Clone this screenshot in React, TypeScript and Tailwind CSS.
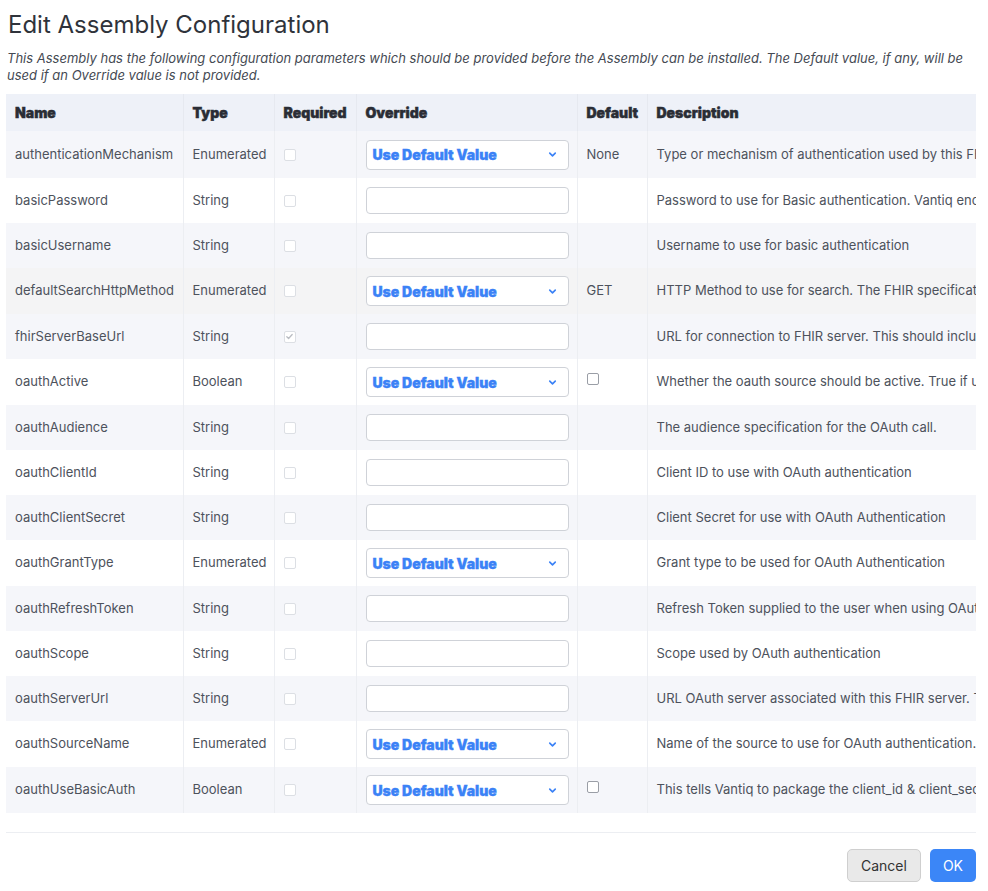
import { ChevronDown } from "lucide-react";

type Param = {
  name: string;
  type: string;
  required?: boolean;
  kind: "select" | "input";
  def?: string;
  defCheck?: boolean;
  desc: string;
};

const params: Param[] = [
  { name: "authenticationMechanism", type: "Enumerated", kind: "select", def: "None", desc: "Type or mechanism of authentication used by this FHIR server when making requests." },
  { name: "basicPassword", type: "String", kind: "input", desc: "Password to use for Basic authentication. Vantiq encrypts this value when stored." },
  { name: "basicUsername", type: "String", kind: "input", desc: "Username to use for basic authentication" },
  { name: "defaultSearchHttpMethod", type: "Enumerated", kind: "select", def: "GET", desc: "HTTP Method to use for search. The FHIR specification allows either GET or POST." },
  { name: "fhirServerBaseUrl", type: "String", required: true, kind: "input", desc: "URL for connection to FHIR server. This should include the base path of the server." },
  { name: "oauthActive", type: "Boolean", kind: "select", defCheck: true, desc: "Whether the oauth source should be active. True if using OAuth authentication." },
  { name: "oauthAudience", type: "String", kind: "input", desc: "The audience specification for the OAuth call." },
  { name: "oauthClientId", type: "String", kind: "input", desc: "Client ID to use with OAuth authentication" },
  { name: "oauthClientSecret", type: "String", kind: "input", desc: "Client Secret for use with OAuth Authentication" },
  { name: "oauthGrantType", type: "Enumerated", kind: "select", desc: "Grant type to be used for OAuth Authentication" },
  { name: "oauthRefreshToken", type: "String", kind: "input", desc: "Refresh Token supplied to the user when using OAuth authentication." },
  { name: "oauthScope", type: "String", kind: "input", desc: "Scope used by OAuth authentication" },
  { name: "oauthServerUrl", type: "String", kind: "input", desc: "URL OAuth server associated with this FHIR server. This is used to obtain tokens." },
  { name: "oauthSourceName", type: "Enumerated", kind: "select", desc: "Name of the source to use for OAuth authentication. Generally not changed." },
  { name: "oauthUseBasicAuth", type: "Boolean", kind: "select", defCheck: true, desc: "This tells Vantiq to package the client_id & client_secret as a basic auth header." },
];

const th =
  "px-[9px] text-left text-[14px] font-black text-[#2a2d35] [-webkit-text-stroke:0.45px_#2a2d35] border-r border-[#e6e9f0] last:border-r-0";
const td = "px-[9px] text-[13px] text-[#4d525c] border-r border-[#eceef2] last:border-r-0 whitespace-nowrap";

function Box({ checked, dark }: { checked?: boolean; dark?: boolean }) {
  return (
    <span
      className={
        "flex h-[12px] w-[12px] items-center justify-center rounded-[2px] border bg-white " +
        (dark ? "border-[#9a9ea6]" : "border-[#dcdfe4]")
      }
    >
      {checked && (
        <svg width="9" height="9" viewBox="0 0 10 10" fill="none">
          <path d="M2 5.2l2 2 4-4.4" stroke="#b9bcc2" strokeWidth="1.4" strokeLinecap="round" strokeLinejoin="round" />
        </svg>
      )}
    </span>
  );
}

export default function App() {
  return (
    <div className="min-h-screen bg-white pl-[6px] pr-[12px] pt-[8px] text-[#4d525c]" style={{ fontFamily: "Inter, 'Noto Sans', sans-serif" }}>
      <h1 className="pl-[2px] text-[24px] leading-[34px] text-[#2f333b]">Edit Assembly Configuration</h1>
      <p className="mt-[8px] pl-[1px] text-[13px] italic leading-[17px] text-[#454a53]">
        This Assembly has the following configuration parameters which should be provided before the Assembly can be installed. The Default value, if any, will be used if an Override value is not provided.
      </p>

      <div className="mt-[10px] w-[970px] overflow-hidden">
        <table className="w-[1300px] table-fixed border-collapse">
          <colgroup>
            <col className="w-[177px]" />
            <col className="w-[91px]" />
            <col className="w-[82px]" />
            <col className="w-[221px]" />
            <col className="w-[70px]" />
            <col />
          </colgroup>
          <thead>
            <tr className="h-[37px] bg-[#eef1f8]">
              <th className={th}>Name</th>
              <th className={th}>Type</th>
              <th className={th}>Required</th>
              <th className={th}>Override</th>
              <th className={th}>Default</th>
              <th className={th}>Description</th>
            </tr>
          </thead>
          <tbody>
            {params.map((p, i) => (
              <tr
                key={p.name}
                className={
                  (i === 0 ? "h-[47px] " : p.kind === "select" ? "h-[46px] " : "h-[45px] ") +
                  (i === 3 ? "bg-[#f4f4f5]" : i % 2 === 0 ? "bg-[#f5f6fa]" : "bg-white")
                }
              >
                <td className={td}>{p.name}</td>
                <td className={td}>{p.type}</td>
                <td className={td}>
                  <Box checked={p.required} />
                </td>
                <td className={td}>
                  {p.kind === "select" ? (
                    <div className="flex h-[30px] w-[203px] items-center justify-between rounded-[4px] border border-[#cfd2d8] bg-white pl-[6px] pr-[10px]">
                      <span className="text-[14px] font-black text-[#3b82f6] [-webkit-text-stroke:0.35px_#3b82f6]">Use Default Value</span>
                      <ChevronDown size={11} strokeWidth={3.5} className="text-[#3b82f6]" />
                    </div>
                  ) : (
                    <div className="h-[27px] w-[203px] rounded-[4px] border border-[#cfd2d8] bg-white" />
                  )}
                </td>
                <td className={td}>
                  {p.def}
                  {p.defCheck && (
                    <span className="-mt-[6px] block">
                      <Box dark />
                    </span>
                  )}
                </td>
                <td className={td}>{p.desc}</td>
              </tr>
            ))}
          </tbody>
        </table>
      </div>

      <div className="mt-[19px] w-[970px] border-t border-[#eceef2]" />
      <div className="flex w-[970px] justify-end gap-[9px] pt-[16px]">
        <button className="h-[33px] rounded-[5px] border border-[#cfcfcf] bg-[#e9e9e9] px-[13px] text-[14px] text-[#333]">Cancel</button>
        <button className="h-[33px] rounded-[5px] bg-[#3b86f7] px-[13px] text-[14px] text-white">OK</button>
      </div>
    </div>
  );
}
